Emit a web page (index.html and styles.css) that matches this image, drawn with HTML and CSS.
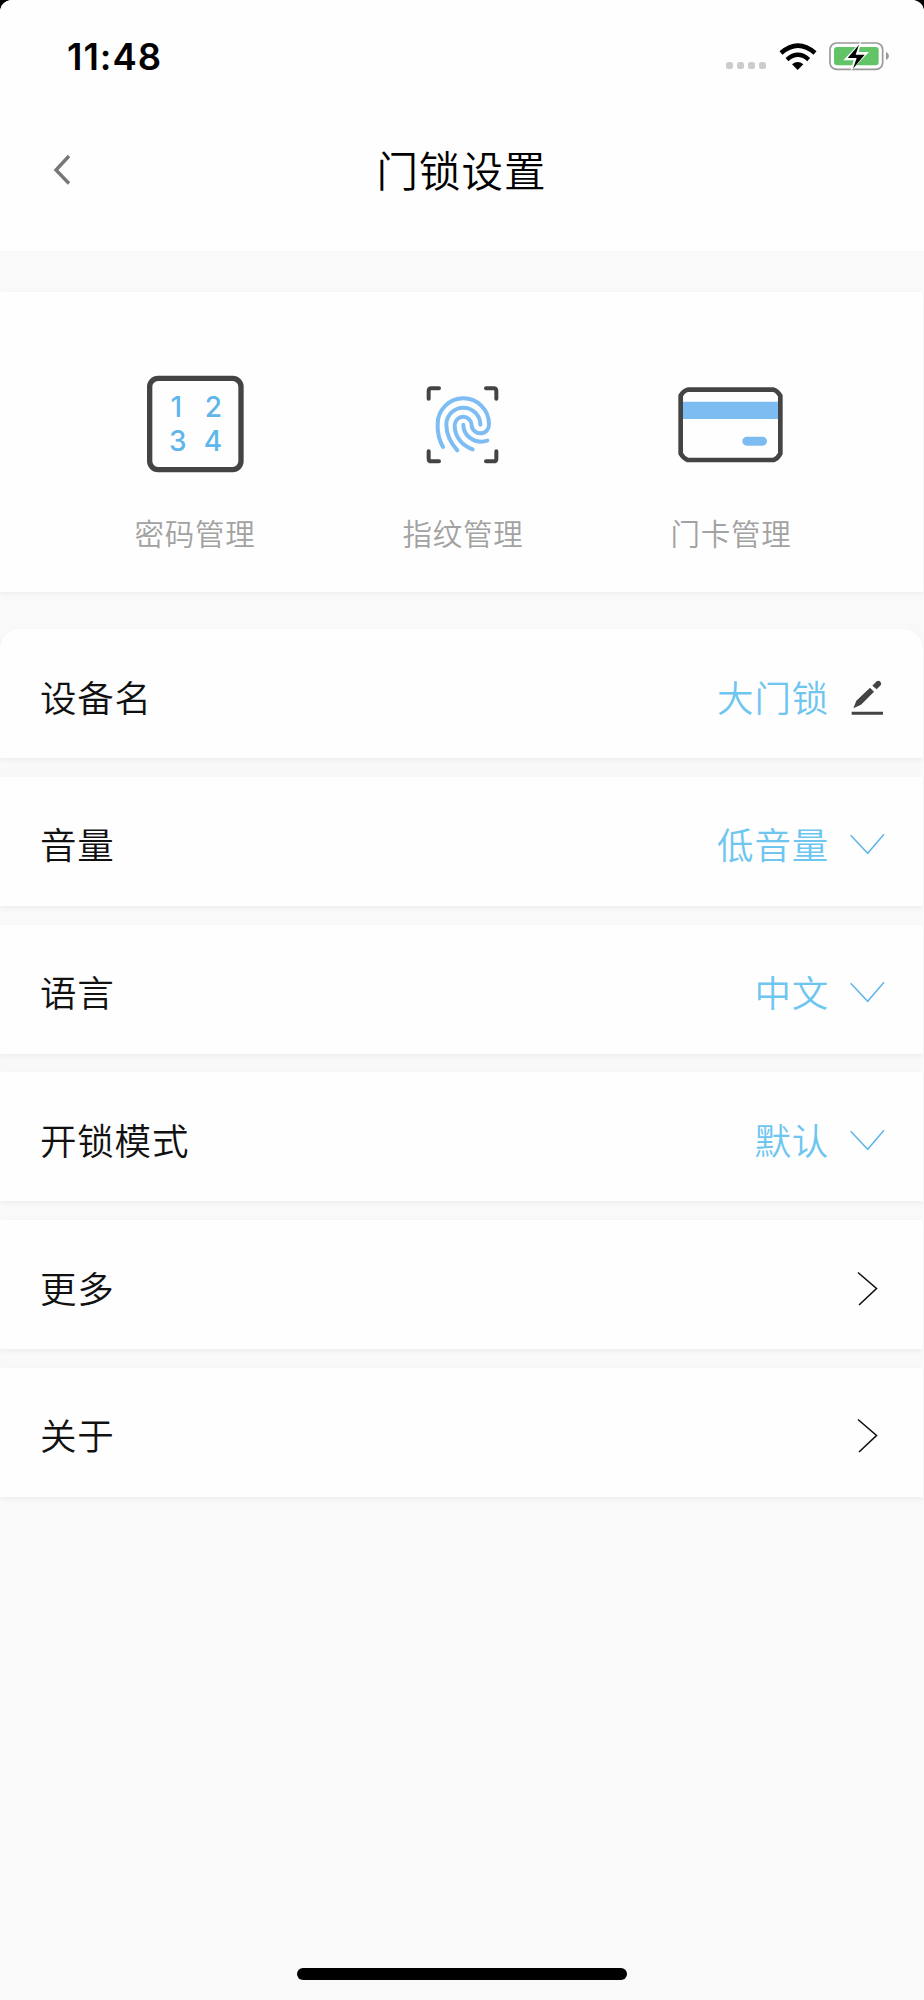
FILE: index.html
```html
<!DOCTYPE html>
<html lang="zh-CN">
<head>
<meta charset="utf-8">
<title>门锁设置</title>
<link rel="stylesheet" href="styles.css">
</head>
<body>
<div class="screen">
  <header class="header">
    <div class="status">
      <span class="time">11:48</span>
      <span class="dots"><i></i><i></i><i></i><i></i></span>
      <svg class="wifi" viewBox="237 123 114 87"><g fill="none" stroke="#000"><path d="M243 156Q294 112 345 156" stroke-width="14"/><path d="M261 176Q294 147 326 176" stroke-width="13"/></g><path d="M276 190Q293 176 310 190L293 207Z"/></svg>
      <svg class="battery" viewBox="387 123 183 93"><rect x="390" y="129" width="158" height="79" rx="20" fill="#fff" stroke="#999" stroke-width="5"/><rect x="402" y="141" width="134" height="55" rx="9" fill="#62c466"/><path d="M558 155Q567 160 567 168T558 181Z" fill="#999"/><path d="M484 124L430 181H461L451 214L507 156H476Z" fill="#fff"/><path d="M477 134L443 174H470L459 206L494 164H467Z"/></svg>
    </div>
    <div class="navbar">
      <svg class="back" viewBox="0 0 20 32"><path d="M16 2L3 16L16 29.5" fill="none" stroke="#777" stroke-width="3.4"/></svg>
      <h1 class="title">门锁设置</h1>
    </div>
  </header>

  <nav class="panel">
    <a class="tile">
      <svg class="tile-icon" viewBox="90 72 330 300"><rect x="119" y="85" width="274" height="274" rx="25" fill="none" stroke="#444" stroke-width="16"/><g class="digits"><text x="199" y="201">1</text><text x="310" y="201">2</text><text x="203" y="304">3</text><text x="309" y="304">4</text></g></svg>
      <span class="tile-label">密码管理</span>
    </a>
    <a class="tile">
      <svg class="tile-icon" viewBox="84 72 330 300"><g fill="none" stroke-linecap="round" stroke-linejoin="round"><path d="M146 146V123Q146 115 154 115H177M318 115H341Q349 115 349 123V146M146 304V326Q146 334 154 334H177M318 334H341Q349 334 349 326V304" stroke="#444" stroke-width="12"/><path d="M189 291C177 270 172 250 173 222A77 77 0 0 1 327 222A26 26 0 0 1 275 226A25.500 25.500 0 0 0 224 226C224 262 248 288 278 298M232 301C208 274 199 252 199 224A51 51 0 0 1 301 224M250 224C250 256 282 284 322 272" stroke="#7dbdf3" stroke-width="12"/></g></svg>
      <span class="tile-label">指纹管理</span>
    </a>
    <a class="tile">
      <svg class="tile-icon" viewBox="78 72 330 300"><path d="M98 155H387V207H98Z" fill="#7dbcf1"/><rect x="277" y="260" width="74" height="27" rx="13.500" fill="#7dbcf1"/><path d="M113 119H371Q381 121 391 137V311Q383 326 371 330H113Q101 326 92 311V137Q100 122 113 119Z" fill="none" stroke="#444" stroke-width="14" stroke-linejoin="round"/></svg>
      <span class="tile-label">门卡管理</span>
    </a>
  </nav>

  <main class="list">
    <div class="row row-first">
      <span class="label">设备名</span><span class="value">大门锁</span>
      <svg class="icon" viewBox="480 328 108 108"><path d="M485 423H579V432H485ZM490 413L499 390L540 351L552 363L513 402ZM547 345L560 332Q566 328 571 333T572 344L560 356Z" fill="#444"/></svg>
    </div>
    <div class="row">
      <span class="label">音量</span><span class="value">低音量</span>
      <svg class="icon" viewBox="480 772 108 108"><path d="M482 797L533 851L582 794" class="chevron"/></svg>
    </div>
    <div class="row">
      <span class="label">语言</span><span class="value">中文</span>
      <svg class="icon" viewBox="480 772 108 108"><path d="M482 797L533 851L582 794" class="chevron"/></svg>
    </div>
    <div class="row">
      <span class="label">开锁模式</span><span class="value">默认</span>
      <svg class="icon" viewBox="480 772 108 108"><path d="M482 797L533 851L582 794" class="chevron"/></svg>
    </div>
    <div class="row">
      <span class="label">更多</span>
      <svg class="icon" viewBox="0 0 36 36"><path d="M8 1.500L26.500 17.500L9 34" class="arrow"/></svg>
    </div>
    <div class="row">
      <span class="label">关于</span>
      <svg class="icon" viewBox="0 0 36 36"><path d="M8 1.500L26.500 17.500L9 34" class="arrow"/></svg>
    </div>
  </main>
  <div class="home-bar"></div>
</div>
</body>
</html>
```

FILE: styles.css
```css
* { box-sizing: border-box; }
body {
  margin: 0;
  background: #000;
  font-family: "Noto Sans CJK SC", sans-serif;
  font-weight: 350;
}
.screen {
  width: 924px;
  height: 2000px;
  display: flex;
  flex-direction: column;
  background: #f9f9f9;
  border-radius: 12px 12px 0 0;
  overflow: hidden;
}
.header { height: 251px; background: #fefefe; }
.status {
  height: 112px;
  padding: 0 34px 0 67px;
  display: flex;
  align-items: center;
}
.time {
  padding-top: 1px;
  font-family: Inter, sans-serif;
  font-size: 36.5px;
  font-weight: 600;
  line-height: 40px;
  letter-spacing: 1px;
}
.dots { display: flex; gap: 4px; margin: 19px 13px 0 auto; }
.dots i { width: 7px; height: 7px; border-radius: 2.5px; background: #ccc; }
.wifi { width: 38px; height: 29px; margin-right: 12px; }
.battery { width: 61px; height: 31px; }
.navbar {
  height: 116px;
  display: grid;
  grid-template-columns: 120px 1fr 120px;
  align-items: center;
}
.back { width: 20px; height: 32px; margin-left: 53px; }
.title {
  margin: 0;
  padding: 0 1px 3px 0;
  text-align: center;
  font-size: 41.5px;
  font-weight: 350;
  letter-spacing: 1px;
  line-height: 60px;
}
.panel {
  width: 923px;
  height: 300px;
  margin-top: 41px;
  padding: 82px 58px 0 61px;
  display: grid;
  grid-template-columns: repeat(3, 268px);
  background: #fefefe;
  box-shadow: 0 2px 5px rgba(0, 0, 0, .05);
}
.tile { display: flex; flex-direction: column; align-items: center; }
.tile-icon { width: 110px; height: 100px; }
.digits {
  fill: #5eb6ea;
  font: 500 84px Inter, sans-serif;
  text-anchor: middle;
}
.tile-label {
  margin-top: 36px;
  font-size: 29.5px;
  line-height: 44px;
  letter-spacing: .7px;
  color: #a2a2a2;
}
.list {
  width: 923px;
  margin-top: 37px;
  display: flex;
  flex-direction: column;
  gap: 18.8px;
}
.row {
  height: 129px;
  padding: 6px 37px 0 40px;
  display: flex;
  align-items: center;
  background: #fefefe;
  box-shadow: 0 2px 5px rgba(0, 0, 0, .05);
  font-size: 36.5px;
  letter-spacing: .8px;
}
.row-first { border-radius: 20px 20px 0 0; }
.label { color: #111; }
.value { margin-left: auto; margin-right: 21px; color: #6ec6f0; }
.label, .value { padding-bottom: 1px; }
.icon { width: 36px; height: 36px; margin-top: 2px; }
.label + .icon { margin-left: auto; }
.chevron { fill: none; stroke: #62b5ea; stroke-width: 4.5; }
.arrow { fill: none; stroke: #111; stroke-width: 1.6; }
.home-bar {
  width: 330px;
  height: 12px;
  margin: auto auto 20px 297px;
  border-radius: 6px;
  background: #000;
}
```
